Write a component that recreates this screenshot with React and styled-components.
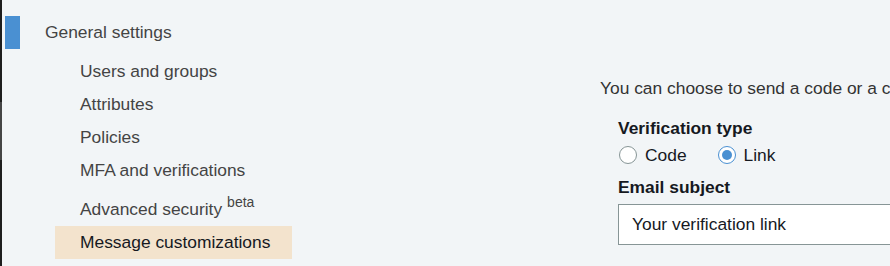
import React from 'react'
import styled, { createGlobalStyle } from 'styled-components'

const GlobalStyle = createGlobalStyle`
  *, *::before, *::after { box-sizing: border-box; }
  html, body { margin: 0; padding: 0; background: #f2f5f7; }
  body { font-family: "Liberation Sans", Arial, sans-serif; font-size: 17.4px; color: #333; }
`

const Page = styled.div`
  display: grid;
  grid-template-columns: 2px 598px 1fr;
  width: 890px;
  height: 266px;
  overflow: hidden;
`

const Frame = styled.div`
  background: linear-gradient(#1e1e1e 0, #1e1e1e 102px, #454545 102px, #454545 160px, #1e1e1e 160px);
`

const Sidebar = styled.nav`
  padding-top: 16px;
`

const Section = styled.div`
  display: flex;
  align-items: center;
  height: 33px;
  padding-left: 3px;
  color: #444;
`

const Marker = styled.span`
  width: 15px;
  height: 33px;
  background: #4a90d2;
  margin-right: 25px;
`

const Items = styled.ul`
  list-style: none;
  margin: 6px 0 0 53px;
  padding: 0;
`

const Item = styled.li`
  display: flex;
  align-items: ${p => (p.$tall ? 'flex-end' : 'center')};
  width: 237px;
  height: ${p => (p.$tall ? '39px' : '33px')};
  padding: ${p => (p.$tall ? '0 0 6px 25px' : '0 0 0 25px')};
  color: ${p => (p.$active ? '#16191f' : '#444')};
  background: ${p => (p.$active ? '#f3e3cd' : 'transparent')};
  white-space: nowrap;
  cursor: pointer;
`

const ItemText = styled.span`
  sup {
    font-size: 14px;
    line-height: 0;
    margin-left: 5px;
    position: relative;
    top: -1px;
  }
`

const Content = styled.main`
  padding-top: 77px;
  white-space: nowrap;
  overflow: hidden;
`

const Intro = styled.p`
  margin: 0 0 18px;
  line-height: 22px;
  color: #333;
`

const Field = styled.div`
  padding-left: 18px;
`

const Label = styled.div`
  font-weight: bold;
  line-height: 22px;
  color: #16191f;
`

const RadioRow = styled.div`
  display: flex;
  align-items: center;
  gap: 30px;
  height: 22px;
  margin: 5px 0 10px;
`

const RadioOption = styled.label`
  display: flex;
  align-items: center;
  gap: 8px;
  color: #16191f;
`

const RadioCircle = styled.span`
  width: 18px;
  height: 18px;
  border-radius: 50%;
  border: 1px solid ${p => (p.$checked ? '#4a90d2' : '#879596')};
  background: #fff;
  display: flex;
  align-items: center;
  justify-content: center;
  margin-left: 1px;

  &::after {
    content: '';
    width: 10px;
    height: 10px;
    border-radius: 50%;
    background: ${p => (p.$checked ? '#4a90d2' : 'transparent')};
  }
`

const TextInput = styled.div`
  margin-top: 6px;
  width: 320px;
  height: 41px;
  border: 1px solid #879596;
  border-right: none;
  background: #fff;
  display: flex;
  align-items: center;
  padding-left: 13px;
  color: #16191f;
`

const navItems = [
  'Users and groups',
  'Attributes',
  'Policies',
  'MFA and verifications',
]

export default function App() {
  return (
    <>
      <GlobalStyle />
      <Page>
        <Frame />
        <Sidebar>
          <Section>
            <Marker />
            General settings
          </Section>
          <Items>
            {navItems.map(item => (
              <Item key={item}>{item}</Item>
            ))}
            <Item $tall>
              <ItemText>
                Advanced security<sup>beta</sup>
              </ItemText>
            </Item>
            <Item $active>Message customizations</Item>
          </Items>
        </Sidebar>
        <Content>
          <Intro>You can choose to send a code or a clickable link and customize the message to verify email addresses.</Intro>
          <Field>
            <Label>Verification type</Label>
            <RadioRow>
              <RadioOption>
                <RadioCircle />
                Code
              </RadioOption>
              <RadioOption>
                <RadioCircle $checked />
                Link
              </RadioOption>
            </RadioRow>
            <Label>Email subject</Label>
            <TextInput>Your verification link</TextInput>
          </Field>
        </Content>
      </Page>
    </>
  )
}
